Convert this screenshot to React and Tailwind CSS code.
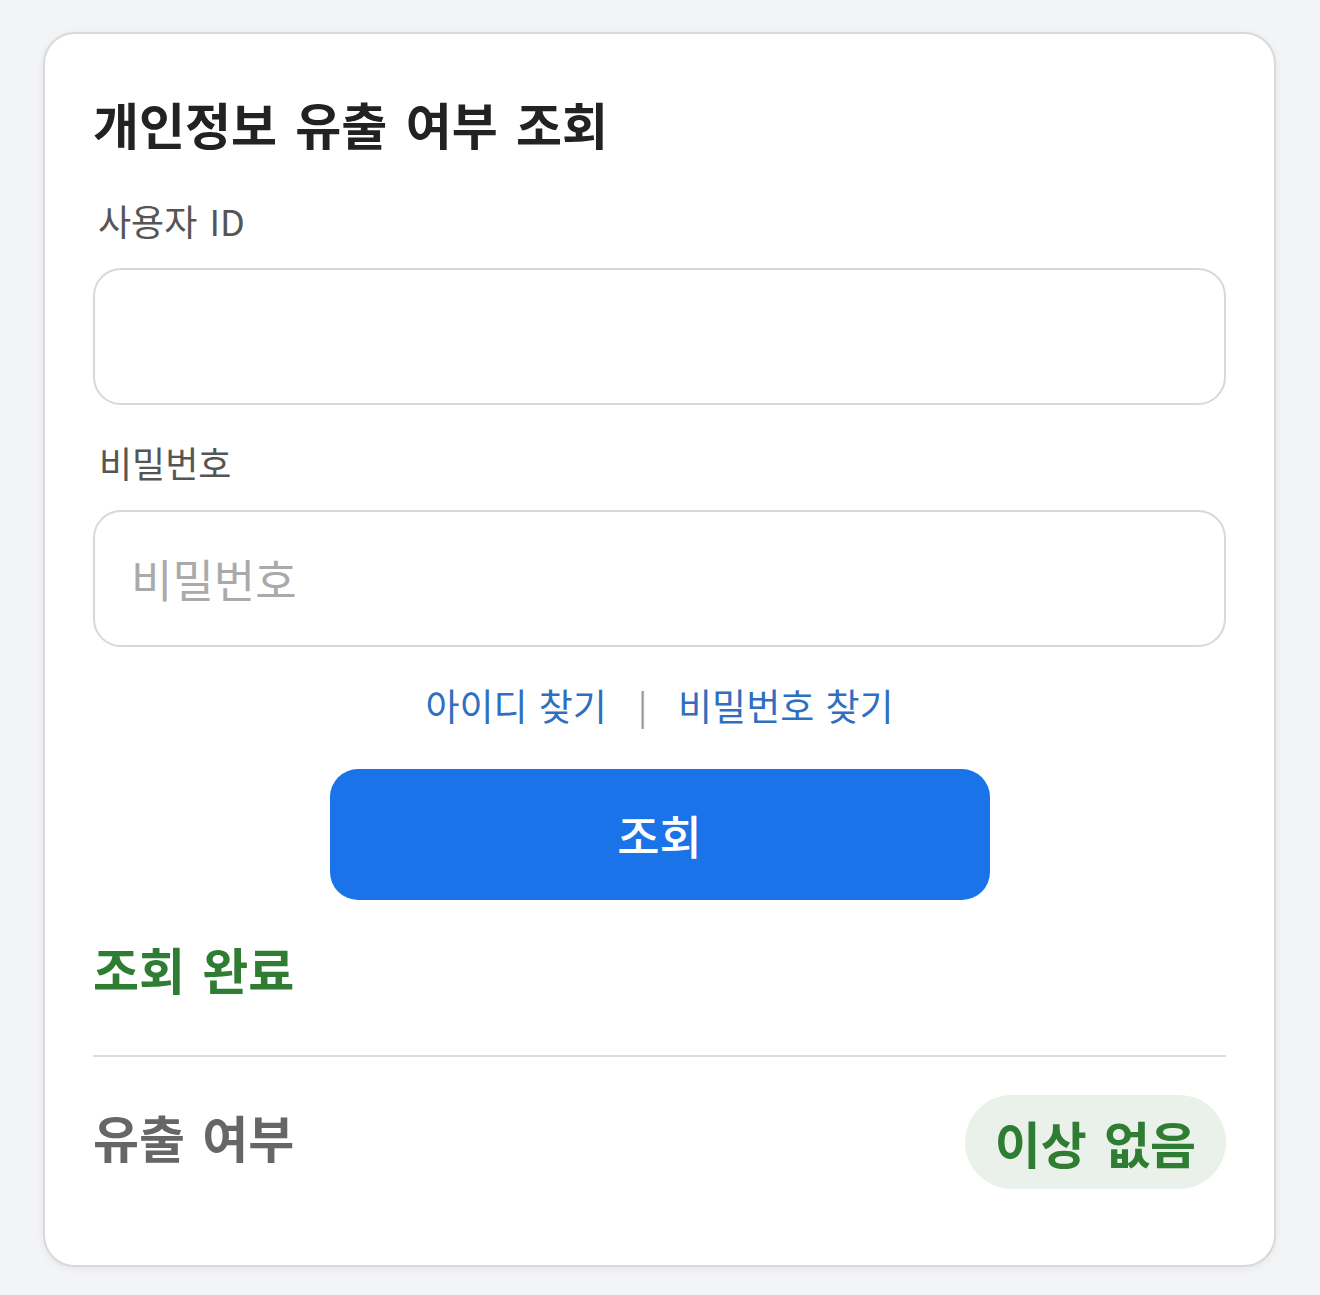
import React from "react";

export default function App() {
  const font = { fontFamily: '"Noto Sans CJK KR", "Noto Sans", sans-serif' };
  return (
    <div className="min-h-[1295px] bg-[#f3f4f6] pt-[32px] pb-[28px] px-[43px]" style={font}>
      <div className="w-[1233px] h-[1235px] bg-white border-2 border-[#d9d9db] rounded-[32px] shadow-[0_2px_8px_rgba(0,0,0,0.06)] px-[48px] pt-[64px] flex flex-col">
        <h1 className="text-[50px] leading-[50px] font-bold text-[#222222] [word-spacing:7px]">개인정보 유출 여부 조회</h1>

        <label className="mt-[54px] ml-[5px] text-[36px] leading-[36px] text-[#555555] [word-spacing:4px]">사용자 ID</label>
        <input
          type="text"
          className="mt-[30px] h-[137px] w-full rounded-[28px] border-2 border-[#d8d8d8] bg-white px-[36px] text-[45px] outline-none"
        />

        <label className="mt-[39px] ml-[6px] text-[36px] leading-[36px] text-[#555555]">비밀번호</label>
        <input
          type="password"
          placeholder="비밀번호"
          className="mt-[30px] h-[137px] w-full rounded-[28px] border-2 border-[#d8d8d8] bg-white px-[36px] text-[45px] outline-none placeholder:text-[#aaaaaa]"
        />

        <div className="mt-[40px] flex items-center justify-center text-[37px] leading-[37px] text-[#2f6fc0] [word-spacing:3px]">
          <span>아이디 찾기</span>
          <span className="mx-[31px] text-[#9a9a9a] text-[34px]">|</span>
          <span>비밀번호 찾기</span>
        </div>

        <button className="mt-[45px] mx-auto w-[660px] h-[131px] rounded-[28px] bg-[#1a73e8] text-white text-[46px] font-medium">
          조회
        </button>

        <div className="mt-[43px] text-[50px] leading-[50px] font-bold text-[#2e7d32] [word-spacing:6px]">조회 완료</div>

        <div className="mt-[62px] h-[2px] w-full bg-[#dcdcdc]" />

        <div className="mt-[38px] flex items-center justify-between">
          <span className="text-[50px] leading-[50px] font-bold text-[#666666] -mt-[12px] [word-spacing:6px]">유출 여부</span>
          <span className="h-[94px] rounded-full bg-[#e9f1ea] px-[30px] flex items-center text-[50px] font-bold text-[#2e7d32] [word-spacing:6px]">
            이상 없음
          </span>
        </div>
      </div>
    </div>
  );
}
